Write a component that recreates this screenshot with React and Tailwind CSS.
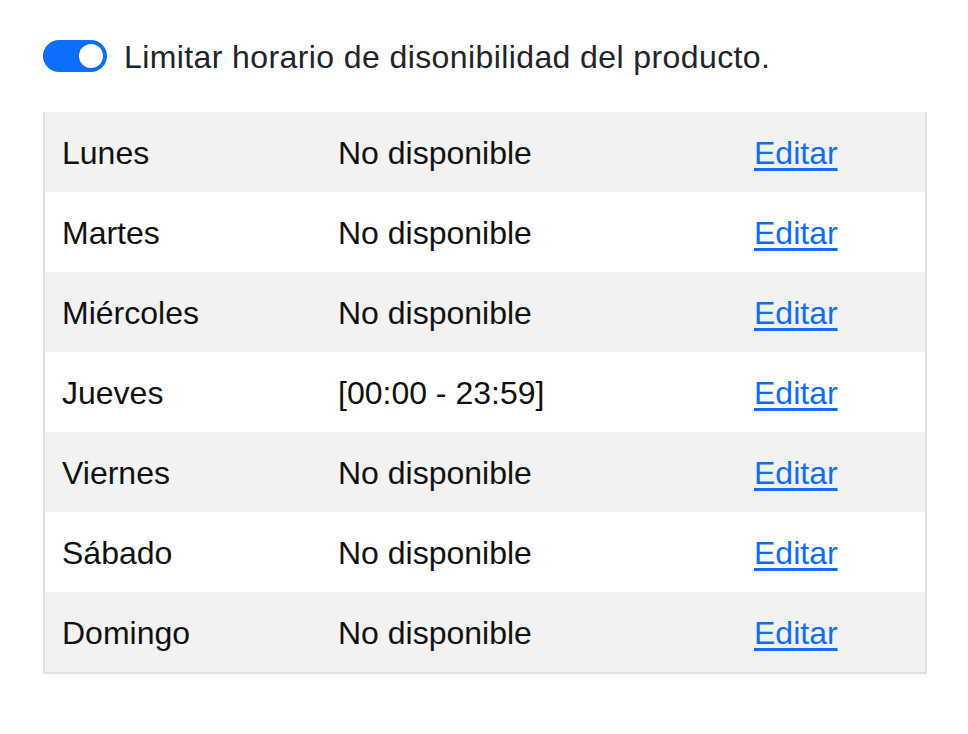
import React from "react";

const days = [
  { day: "Lunes", hours: "No disponible" },
  { day: "Martes", hours: "No disponible" },
  { day: "Miércoles", hours: "No disponible" },
  { day: "Jueves", hours: "[00:00 - 23:59]" },
  { day: "Viernes", hours: "No disponible" },
  { day: "Sábado", hours: "No disponible" },
  { day: "Domingo", hours: "No disponible" },
];

const App = () => {
  return (
    <div className="min-h-screen bg-white text-[#212529] font-['Liberation_Sans',Arial,sans-serif] text-[32px] leading-none pt-10 px-[43px]">
      {/* switch */}
      <div className="flex items-center gap-[17px] h-8">
        <div className="w-16 h-8 rounded-full bg-[#0d6efd] flex items-center justify-end pr-1">
          <div className="w-6 h-6 rounded-full bg-white" />
        </div>
        <span className="pt-[2px] tracking-[0.4px]">Limitar horario de disonibilidad del producto.</span>
      </div>

      {/* schedule table */}
      <div className="mt-10 w-[884px] border-x-2 border-b-2 border-[#dee2e6]">
        {days.map((row, index) => (
          <div
            key={row.day}
            className={`grid grid-cols-[276px_416px_1fr] h-20 items-center pt-[2px] text-[#111] ${
              index % 2 === 0 ? "bg-[#f2f2f2]" : "bg-white"
            }`}
          >
            <div className="pl-[17px]">{row.day}</div>
            <div className="pl-[17px]">{row.hours}</div>
            <div className="pl-[17px]">
              <a href="#" className="text-[#0d6efd] underline underline-offset-4">
                Editar
              </a>
            </div>
          </div>
        ))}
      </div>
    </div>
  );
};

export default App;
